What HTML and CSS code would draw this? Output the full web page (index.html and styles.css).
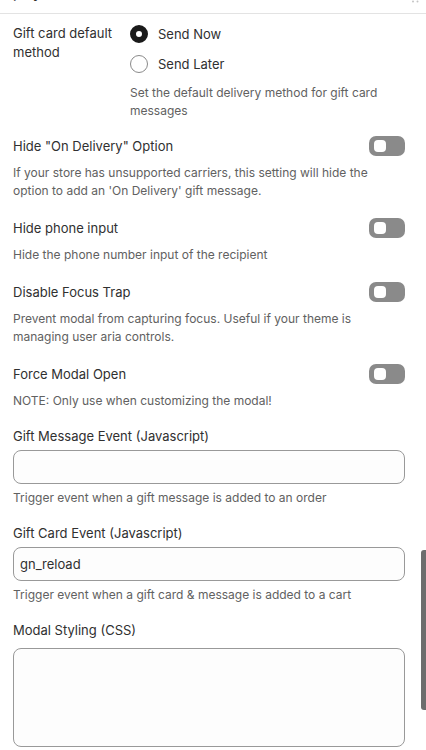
FILE: index.html
```html
<!DOCTYPE html>
<html lang="en">
<head>
<meta charset="utf-8">
<title>Settings</title>
<link rel="stylesheet" href="styles.css">
</head>
<body>
<div class="page">
  <div class="top">
    <span class="top-title">play toolbar</span>
    <svg class="handle" width="7" height="3" viewBox="0 0 7 3"><circle cx="1" cy="1.5" r="1" fill="#c4c4c4"/><circle cx="5.5" cy="1.5" r="1" fill="#c4c4c4"/></svg>
  </div>
  <div class="content">
    <div class="radio-section">
      <div class="radio-label">Gift card default method</div>
      <div class="radio-col">
        <label class="option"><span class="radio on"></span><span>Send Now</span></label>
        <label class="option"><span class="radio"></span><span>Send Later</span></label>
        <p class="help">Set the default delivery method for gift card messages</p>
      </div>
    </div>

    <div class="toggle-section">
      <div class="toggle-row"><span>Hide &quot;On Delivery&quot; Option</span><span class="toggle"><span class="knob"></span></span></div>
      <p class="help">If your store has unsupported carriers, this setting will hide the option to add an 'On Delivery' gift message.</p>
    </div>
    <div class="toggle-section">
      <div class="toggle-row"><span>Hide phone input</span><span class="toggle"><span class="knob"></span></span></div>
      <p class="help">Hide the phone number input of the recipient</p>
    </div>
    <div class="toggle-section">
      <div class="toggle-row"><span>Disable Focus Trap</span><span class="toggle"><span class="knob"></span></span></div>
      <p class="help">Prevent modal from capturing focus. Useful if your theme is managing user aria controls.</p>
    </div>
    <div class="toggle-section">
      <div class="toggle-row"><span>Force Modal Open</span><span class="toggle"><span class="knob"></span></span></div>
      <p class="help">NOTE: Only use when customizing the modal!</p>
    </div>

    <div class="field">
      <label class="field-label">Gift Message Event (Javascript)</label>
      <input class="text-input" type="text" value="">
      <p class="help">Trigger event when a gift message is added to an order</p>
    </div>
    <div class="field">
      <label class="field-label">Gift Card Event (Javascript)</label>
      <input class="text-input" type="text" value="gn_reload">
      <p class="help">Trigger event when a gift card &amp; message is added to a cart</p>
    </div>
    <div class="field">
      <label class="field-label">Modal Styling (CSS)</label>
      <textarea class="text-input text-area"></textarea>
    </div>
  </div>
  <div class="scrollbar"></div>
</div>
</body>
</html>
```

FILE: styles.css
```css
html, body {
  margin: 0;
  padding: 0;
  background: #ffffff;
}

body {
  font-family: Inter, "Noto Sans", "Liberation Sans", sans-serif;
  color: #303030;
  overflow: hidden;
}

.page {
  position: relative;
  width: 426px;
  height: 750px;
  overflow: hidden;
}

.top {
  height: 13px;
  border-bottom: 1px solid #e3e3e3;
  display: flex;
  justify-content: space-between;
  align-items: flex-start;
  padding: 0 7px 0 13px;
  overflow: hidden;
}

.top-title {
  font-size: 14px;
  line-height: 16px;
  font-weight: 500;
  margin-top: -15px;
}

.handle {
  margin-top: 0;
  flex: none;
}

.content {
  padding: 10px 21px 0 13px;
}

.radio-section {
  display: grid;
  grid-template-columns: 117px 1fr;
}

.radio-label {
  font-size: 13px;
  line-height: 19px;
  padding-right: 4px;
}

.radio-col {
  display: flex;
  flex-direction: column;
  gap: 10px;
}

.option {
  display: flex;
  align-items: center;
  gap: 10px;
  height: 20px;
  font-size: 13px;
  line-height: 20px;
}

.radio {
  width: 18px;
  height: 18px;
  box-sizing: border-box;
  border-radius: 50%;
  border: 1px solid #8a8a8a;
  background: #ffffff;
  flex: none;
}

.radio.on {
  border: 6px solid #1a1a1a;
}

.help {
  margin: 0;
  font-size: 12px;
  line-height: 18px;
  color: #616161;
}

.toggle-section {
  margin-top: 16px;
}

.toggle-section + .toggle-section {
  margin-top: 18px;
}

.toggle-row {
  display: flex;
  justify-content: space-between;
  align-items: center;
  height: 20px;
  font-size: 13px;
  line-height: 20px;
}

.toggle {
  width: 36px;
  height: 20px;
  box-sizing: border-box;
  border-radius: 7px;
  background: #8a8a8a;
  display: flex;
  align-items: center;
  padding-left: 5px;
  flex: none;
}

.knob {
  width: 12px;
  height: 12px;
  border-radius: 4px;
  background: #ffffff;
}

.toggle-section .help {
  margin-top: 8px;
}

.field {
  margin-top: 16px;
}

.field-label {
  display: block;
  font-size: 13px;
  line-height: 20px;
  margin-bottom: 4px;
}

.text-input {
  display: block;
  width: 100%;
  height: 34px;
  box-sizing: border-box;
  margin: 0;
  border: 1px solid #999999;
  border-radius: 8px;
  background: #fdfdfd;
  padding: 0 6px;
  font-family: Inter, "Noto Sans", "Liberation Sans", sans-serif;
  font-size: 13px;
  color: #303030;
  outline: none;
}

.text-area {
  height: 99px;
  margin-top: 8px;
  resize: none;
  padding: 6px;
}

.field .help {
  margin-top: 5px;
}

.scrollbar {
  position: absolute;
  right: 0;
  top: 550px;
  width: 5px;
  height: 160px;
  border-radius: 3px 0 0 3px;
  background: #6d6d6d;
}
```
